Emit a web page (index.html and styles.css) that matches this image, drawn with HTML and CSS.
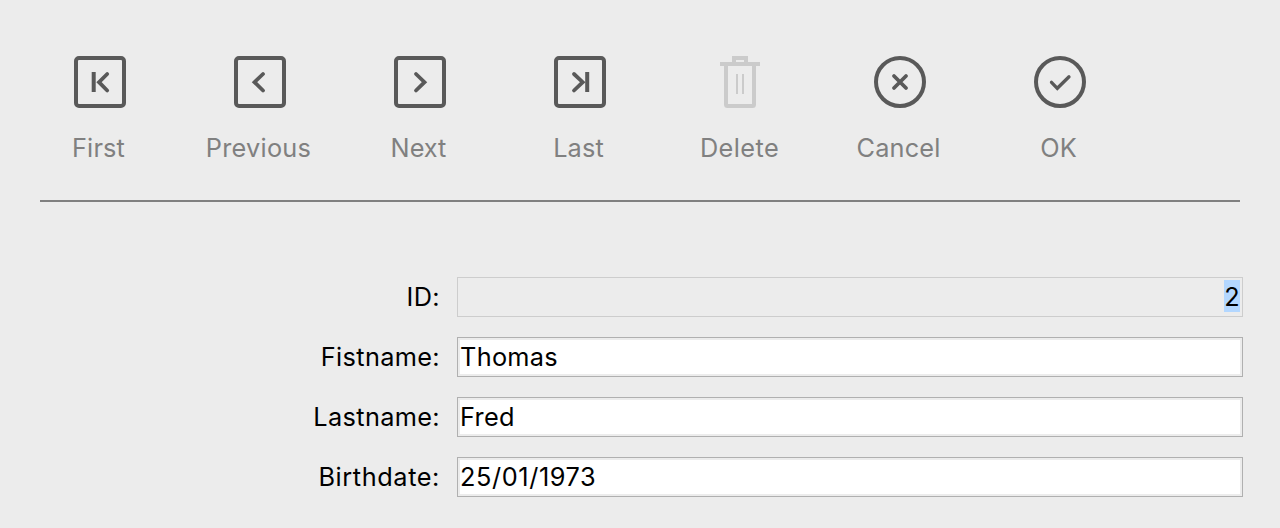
FILE: index.html
```html
<!DOCTYPE html>
<html lang="en">
<head>
<meta charset="utf-8">
<title>Contact</title>
<link rel="stylesheet" href="styles.css">
</head>
<body>
<nav class="toolbar">
  <div class="tool"><svg class="icon" viewBox="0 0 64 64"><rect x="8" y="8" width="48" height="48" rx="3"/><path class="round" d="M39.2 24 31 32.2 39.2 40.5"/><path d="M25.7 22v20"/></svg><span class="caption">First</span></div>
  <div class="tool"><svg class="icon" viewBox="0 0 64 64"><rect x="8" y="8" width="48" height="48" rx="3"/><path class="round" d="M35 24 26.5 32.2 35 40.5"/></svg><span class="caption previous">Previous</span></div>
  <div class="tool"><svg class="icon" viewBox="0 0 64 64"><rect x="8" y="8" width="48" height="48" rx="3"/><path class="round" d="M28 24 36.5 32.2 28 40.5"/></svg><span class="caption next">Next</span></div>
  <div class="tool"><svg class="icon" viewBox="0 0 64 64"><rect x="8" y="8" width="48" height="48" rx="3"/><path class="round" d="M26 24 34.7 32.2 26 40.5"/><path d="M39.2 22v20"/></svg><span class="caption">Last</span></div>
  <div class="tool"><svg class="icon disabled" viewBox="0 0 64 64"><path d="M12 14H52M26 14V8H38V14M18 15V54.5Q18 56 19.5 56H44.5Q46 56 46 54.5V15"/><path class="thin" d="M29 24V44M35 24V44"/></svg><span class="caption delete">Delete</span></div>
  <div class="tool"><svg class="icon" viewBox="0 0 64 64"><circle cx="32" cy="32" r="24"/><path class="round" d="M26 26 38 38M38 26 26 38"/></svg><span class="caption">Cancel</span></div>
  <div class="tool"><svg class="icon" viewBox="0 0 64 64"><circle cx="32" cy="32" r="24"/><path class="check" d="M23.5 32.3 29.3 38.3 41 26.8"/></svg><span class="caption next">OK</span></div>
</nav>
<form class="form">
  <div class="row"><span class="label">ID:</span><div class="field readonly"><span class="selected">2</span></div></div>
  <div class="row"><span class="label">Fistname:</span><div class="field"><span class="value">Thomas</span></div></div>
  <div class="row"><span class="label">Lastname:</span><div class="field"><span class="value">Fred</span></div></div>
  <div class="row"><span class="label birthdate">Birthdate:</span><div class="field"><span class="value date">25/01/1973</span></div></div>
</form>
</body>
</html>
```
FILE: styles.css
```css
* { box-sizing: border-box; }
body {
  margin: 0;
  height: 528px;
  overflow: hidden;
  background: #ececec;
  color: #000;
  font: 25.3px/32px Inter, "Liberation Sans", sans-serif;
  font-feature-settings: "calt" 0;
}
.toolbar {
  display: flex;
  height: 202px;
  margin: 0 40px;
  padding-top: 50px;
  border-bottom: 2px solid #808080;
}
.tool {
  display: flex;
  flex-direction: column;
  align-items: center;
  width: 160px;
  margin-left: -20px;
  margin-right: 20px;
}
.icon {
  width: 64px;
  height: 64px;
  fill: none;
  stroke: #595959;
  stroke-width: 4;
}
.round { stroke-linecap: round; stroke-width: 3.8; }
.check { stroke-linecap: round; stroke-width: 3.3; }
.disabled { stroke: #cbcbcb; }
.thin { stroke-width: 2; }
.caption {
  margin: 18px 3px 0 0;
  color: #808080;
  letter-spacing: 0.15px;
  white-space: nowrap;
}
.previous { letter-spacing: 0.25px; }
.next { letter-spacing: 0; }
.delete { margin-right: 1px; letter-spacing: 0.4px; }
.form {
  display: flex;
  flex-direction: column;
  gap: 20px;
  margin: 75px 37px 0 40px;
}
.row { display: flex; height: 40px; }
.label {
  width: 400px;
  margin-right: 17px;
  line-height: 40px;
  letter-spacing: 0.35px;
  text-align: right;
}
.birthdate { letter-spacing: 0.6px; }
.field {
  display: flex;
  flex: 1;
  padding: 0 2px;
  border: 1px solid #b0b0b0;
  box-shadow: inset 0 0 0 2px #ececec;
  background: #fff;
  line-height: 38px;
}
.value { letter-spacing: 0.3px; }
.date { letter-spacing: 0.6px; }
.readonly {
  justify-content: flex-end;
  border-color: #cdcdcd;
  padding: 2px;
  background: #ececec;
}
.selected {
  width: 16px;
  height: 32px;
  background: #b3d7ff;
  line-height: 34px;
  text-align: center;
}
```
